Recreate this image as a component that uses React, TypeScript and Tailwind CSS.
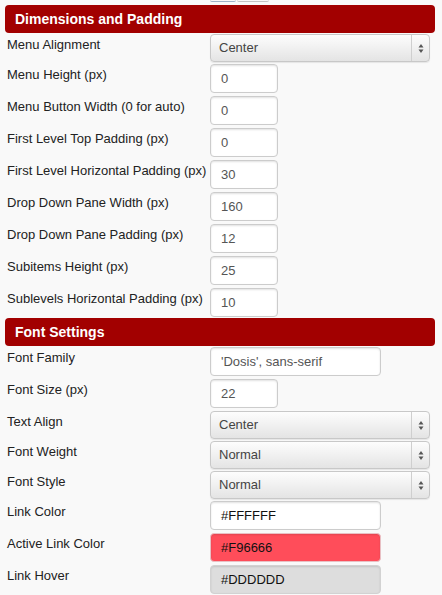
type Row =
  | { kind: "input"; label: string; value: string; wide?: boolean; tone?: "red" | "grey" | "white" }
  | { kind: "select"; label: string; value: string };

const dimensions: Row[] = [
  { kind: "select", label: "Menu Alignment", value: "Center" },
  { kind: "input", label: "Menu Height (px)", value: "0" },
  { kind: "input", label: "Menu Button Width (0 for auto)", value: "0" },
  { kind: "input", label: "First Level Top Padding (px)", value: "0" },
  { kind: "input", label: "First Level Horizontal Padding (px)", value: "30" },
  { kind: "input", label: "Drop Down Pane Width (px)", value: "160" },
  { kind: "input", label: "Drop Down Pane Padding (px)", value: "12" },
  { kind: "input", label: "Subitems Height (px)", value: "25" },
  { kind: "input", label: "Sublevels Horizontal Padding (px)", value: "10" },
];

const fonts: Row[] = [
  { kind: "input", label: "Font Family", value: "'Dosis', sans-serif", wide: true },
  { kind: "input", label: "Font Size (px)", value: "22" },
  { kind: "select", label: "Text Align", value: "Center" },
  { kind: "select", label: "Font Weight", value: "Normal" },
  { kind: "select", label: "Font Style", value: "Normal" },
  { kind: "input", label: "Link Color", value: "#FFFFFF", wide: true, tone: "white" },
  { kind: "input", label: "Active Link Color", value: "#F96666", wide: true, tone: "red" },
  { kind: "input", label: "Link Hover", value: "#DDDDDD", wide: true, tone: "grey" },
];

function SectionHeader({ title }: { title: string }) {
  return (
    <div className="h-[28px] mb-[1px] rounded-[4px] bg-[#a20000] px-[10px] text-[14px] font-bold leading-[28px] text-white">
      {title}
    </div>
  );
}

function SelectBox({ value }: { value: string }) {
  return (
    <div className="flex h-[28px] w-[220px] items-center rounded-[4px] border border-[#c8c8c8] bg-gradient-to-b from-[#fdfdfd] to-[#e4e4e4] shadow-[0_1px_1px_rgba(0,0,0,0.08)]">
      <div className="flex-1 pl-[8px] text-[13px] text-[#444]">{value}</div>
      <div className="flex h-full w-[18px] items-center justify-center border-l border-[#cfcfcf]">
        <svg width="6" height="11" viewBox="0 0 6 11">
          <path d="M3 1 L5.5 4.5 L0.5 4.5 Z" fill="#555" />
          <path d="M3 10 L5.5 6.5 L0.5 6.5 Z" fill="#555" />
        </svg>
      </div>
    </div>
  );
}

function TextBox({ value, wide, tone }: { value: string; wide?: boolean; tone?: "red" | "grey" | "white" }) {
  const width = wide ? "w-[171px]" : "w-[68px]";
  let look = "bg-white text-[#555] border-[#cccccc]";
  if (tone === "white") look = "bg-white text-[#111] border-[#cccccc]";
  if (tone === "red") look = "bg-[#ff4d5a] text-[#111] border-[#e8c0c4]";
  if (tone === "grey") look = "bg-[#dddddd] text-[#111] border-[#d2d2d2]";
  return (
    <div
      className={`h-[29px] ${width} ${look} rounded-[4px] border px-[10px] text-[13px] leading-[27px] shadow-[inset_0_1px_2px_rgba(0,0,0,0.12)]`}
    >
      {value}
    </div>
  );
}

function Section({ rows, tight }: { rows: Row[]; tight?: boolean }) {
  return (
    <div>
      {rows.map((r, i) => {
        const last = tight && i === rows.length - 1;
        const h = r.kind === "select" ? "h-[30px]" : last ? "h-[30px]" : "h-[32px]";
        return (
          <div key={r.label} className={`flex ${h}`}>
            <div className="w-[205px] pl-[2px] pt-[1px] text-[13px] leading-[20px] text-[#222]">{r.label}</div>
            {r.kind === "select" ? <SelectBox value={r.value} /> : <TextBox value={r.value} wide={r.wide} tone={r.tone} />}
          </div>
        );
      })}
    </div>
  );
}

export default function App() {
  return (
    <div className="h-[595px] w-[442px] overflow-hidden bg-[#f9f9f9] font-['Liberation_Sans',Arial,sans-serif]">
      <div className="flex h-[5px] gap-[1px] pl-[210px]">
        <div className="h-[2px] w-[26px] rounded-b-[2px] border-b border-[#9fb3c8]" />
        <div className="h-[2px] w-[32px] rounded-b-[2px] border-b border-[#c4c4c4]" />
      </div>
      <div className="w-[435px] pl-[5px]">
        <SectionHeader title="Dimensions and Padding" />
        <Section rows={dimensions} tight />
        <SectionHeader title="Font Settings" />
        <Section rows={fonts} />
      </div>
    </div>
  );
}
